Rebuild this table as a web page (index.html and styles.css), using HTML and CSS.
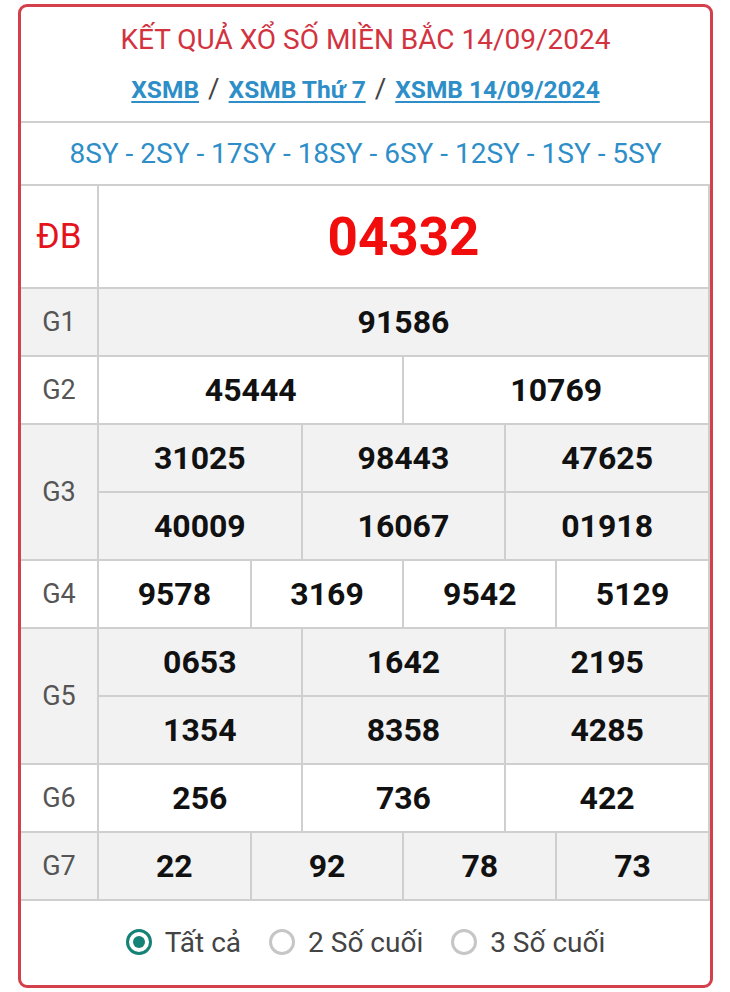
FILE: index.html
```html
<!DOCTYPE html>
<html lang="vi">
<head>
<meta charset="utf-8">
<link rel="stylesheet" href="styles.css">
</head>
<body>
<div class="card">
  <div class="head">
    <h1 class="title">KẾT QUẢ XỔ SỐ MIỀN BẮC 14/09/2024</h1>
    <div class="crumbs">
      <a href="#">XSMB</a><span class="sep">/</span><a href="#">XSMB Thứ 7</a><span class="sep">/</span><a href="#">XSMB 14/09/2024</a>
    </div>
  </div>
  <div class="codes">8SY - 2SY - 17SY - 18SY - 6SY - 12SY - 1SY - 5SY</div>
  <table class="res">
    <colgroup>
      <col class="lab">
      <col span="12">
    </colgroup>
    <tr class="db">
      <td class="label red">ĐB</td>
      <td colspan="12" class="big">04332</td>
    </tr>
    <tr class="gray">
      <td class="label">G1</td>
      <td colspan="12">91586</td>
    </tr>
    <tr>
      <td class="label">G2</td>
      <td colspan="6">45444</td>
      <td colspan="6">10769</td>
    </tr>
    <tr class="gray">
      <td class="label" rowspan="2">G3</td>
      <td colspan="4">31025</td>
      <td colspan="4">98443</td>
      <td colspan="4">47625</td>
    </tr>
    <tr class="gray">
      <td colspan="4">40009</td>
      <td colspan="4">16067</td>
      <td colspan="4">01918</td>
    </tr>
    <tr>
      <td class="label">G4</td>
      <td colspan="3">9578</td>
      <td colspan="3">3169</td>
      <td colspan="3">9542</td>
      <td colspan="3">5129</td>
    </tr>
    <tr class="gray">
      <td class="label" rowspan="2">G5</td>
      <td colspan="4">0653</td>
      <td colspan="4">1642</td>
      <td colspan="4">2195</td>
    </tr>
    <tr class="gray">
      <td colspan="4">1354</td>
      <td colspan="4">8358</td>
      <td colspan="4">4285</td>
    </tr>
    <tr>
      <td class="label">G6</td>
      <td colspan="4">256</td>
      <td colspan="4">736</td>
      <td colspan="4">422</td>
    </tr>
    <tr class="gray">
      <td class="label">G7</td>
      <td colspan="3">22</td>
      <td colspan="3">92</td>
      <td colspan="3">78</td>
      <td colspan="3">73</td>
    </tr>
  </table>
  <div class="opts">
    <label class="opt"><span class="radio on"></span>Tất cả</label>
    <label class="opt"><span class="radio"></span>2 Số cuối</label>
    <label class="opt"><span class="radio"></span>3 Số cuối</label>
  </div>
</div>
</body>
</html>
```
FILE: styles.css
```css
html, body {
  margin: 0;
  padding: 0;
  background: #fff;
}
body {
  font-family: Roboto, "Noto Sans", Arial, sans-serif;
}
.card {
  box-sizing: border-box;
  margin: 4px 0 0 18px;
  width: 695px;
  height: 984px;
  border: 3px solid #d43f4c;
  border-radius: 9px;
  overflow: hidden;
  display: flex;
  flex-direction: column;
}
.head {
  height: 116px;
  flex: none;
  display: flex;
  flex-direction: column;
  align-items: center;
  border-bottom: 2px solid #cfcfcf;
  box-sizing: border-box;
}
.title {
  margin: 16px 0 0;
  font-size: 28px;
  font-weight: 400;
  color: #d2333f;
  line-height: 34px;
}
.crumbs {
  margin-top: 16px;
  font-size: 24.5px;
  line-height: 32px;
  font-weight: 700;
}
.crumbs a {
  color: #2e8ec8;
  text-decoration: underline;
  text-decoration-thickness: 2px;
  text-underline-offset: 3px;
}
.sep {
  color: #444;
  font-weight: 400;
  margin: 0 9px;
  font-size: 28px;
}
.codes {
  height: 63px;
  flex: none;
  display: flex;
  align-items: center;
  justify-content: center;
  color: #2e8ec8;
  font-size: 28px;
  border-bottom: 2px solid #cfcfcf;
  box-sizing: border-box;
}
.res {
  width: 100%;
  border-collapse: collapse;
  table-layout: fixed;
  margin-top: -2px;
  flex: none;
}
.res col.lab {
  width: 77px;
}
.res td {
  border: 2px solid #cfcfcf;
  text-align: center;
  height: 66px;
  padding: 0;
  font-size: 32px;
  font-weight: 700;
  color: #111;
}
.res td.label {
  border-left: none;
  font-size: 27px;
  font-weight: 400;
  color: #555;
}
.res td.label.red {
  color: #e3141b;
  font-size: 35px;
}
.res tr.db td {
  height: 101px;
}
.res td.big {
  color: #f20d0d;
  font-size: 53px;
}
.res tr.gray td {
  background: #f2f2f2;
}
.opts {
  flex: 1;
  display: flex;
  align-items: center;
  justify-content: center;
  gap: 28px;
  padding-bottom: 2px;
}
.opt {
  display: flex;
  align-items: center;
  font-size: 28px;
  color: #444;
}
.radio {
  box-sizing: border-box;
  width: 26px;
  height: 26px;
  border-radius: 50%;
  border: 3px solid #c6c6c6;
  margin-right: 13px;
  background: #fff;
  position: relative;
}
.radio.on {
  border: 3px solid #148276;
}
.radio.on::after {
  content: "";
  position: absolute;
  left: 4px;
  top: 4px;
  width: 12px;
  height: 12px;
  border-radius: 50%;
  background: #148276;
}
```
